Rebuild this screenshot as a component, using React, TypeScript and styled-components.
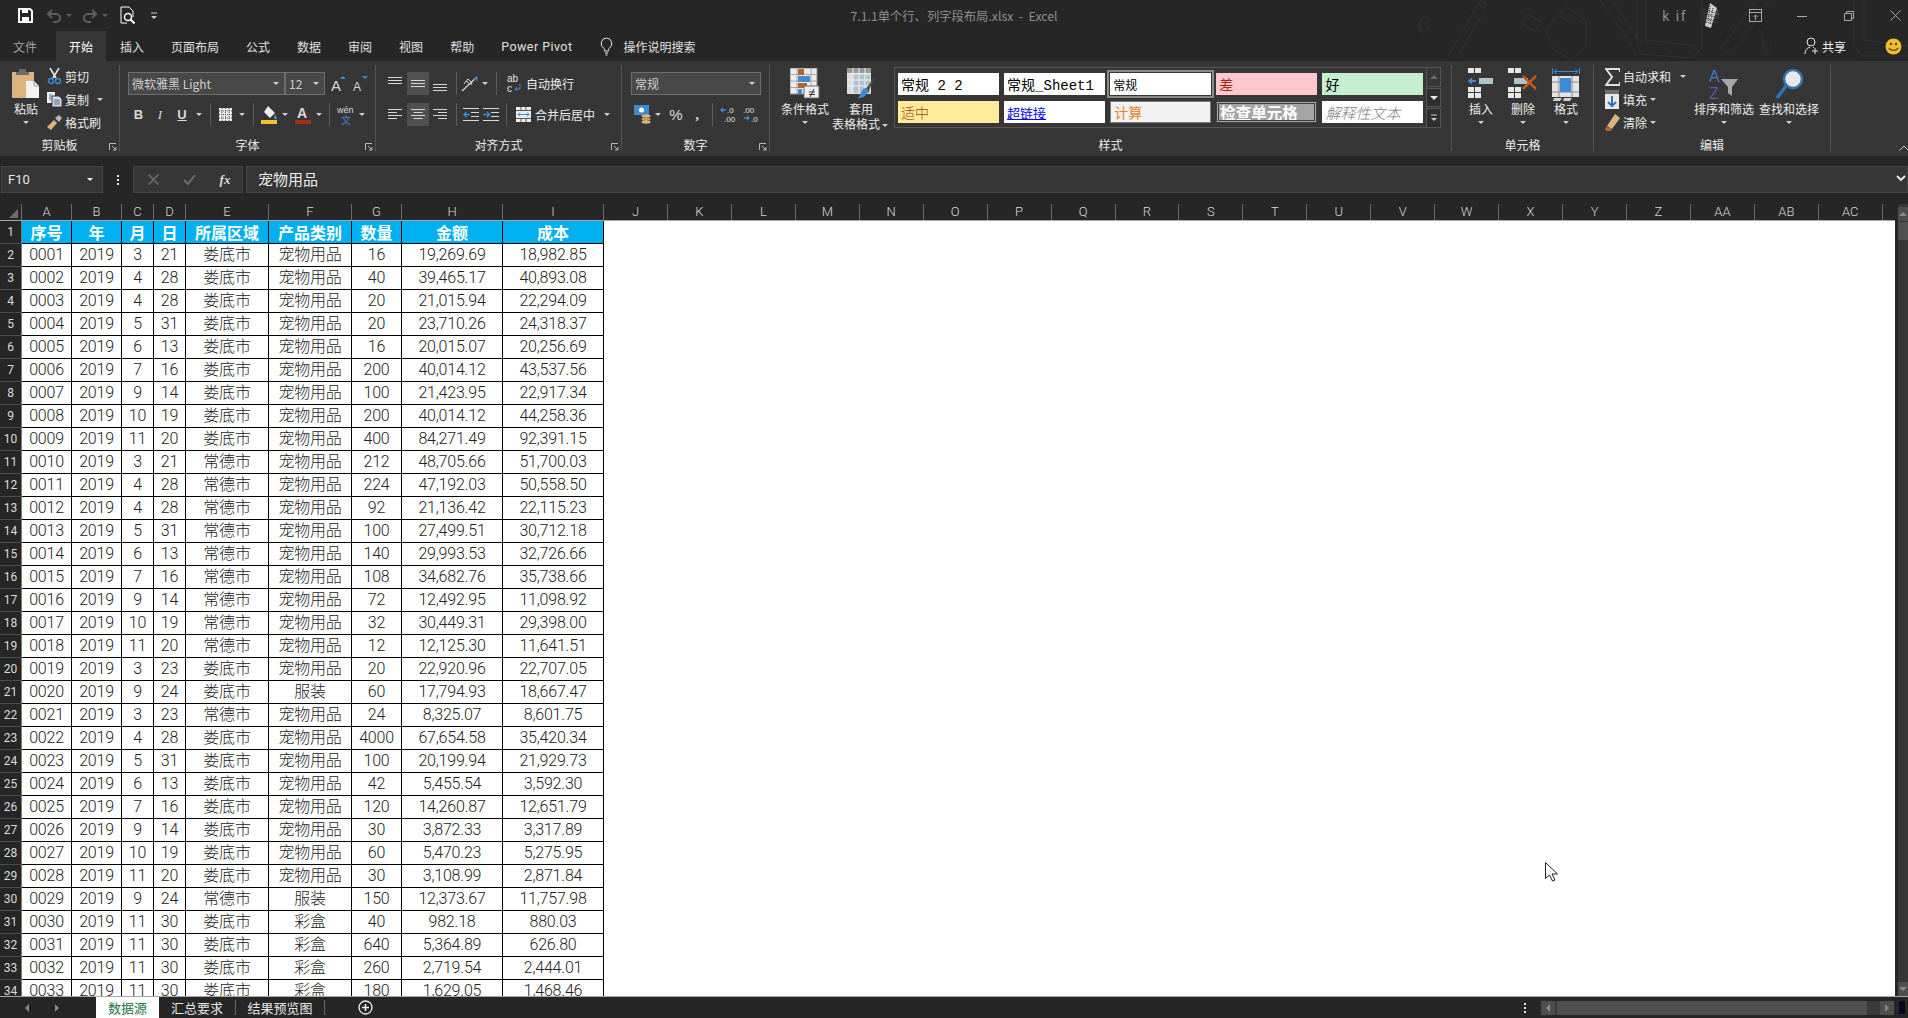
import * as React from 'react';
import styled, { createGlobalStyle } from 'styled-components';

const Global = createGlobalStyle`
  html, body { margin: 0; padding: 0; background: #262626; overflow: hidden; }
  * { box-sizing: border-box; }
`;

const UI_FONT = `"Noto Sans CJK SC", "Noto Sans", sans-serif`;
const CELL_FONT = `Roboto, "Noto Sans CJK SC", sans-serif`;

const Win = styled.div`
  width: 1908px;
  height: 1018px;
  display: flex;
  flex-direction: column;
  overflow: hidden;
  position: relative;
  background: #262626;
  color: #e6e6e6;
  font: 12px ${UI_FONT};
`;

/* ---------- title + tabs ---------- */
const Header = styled.header`
  position: relative;
  height: 61px;
  flex: none;
`;
const Doodles = styled.svg`
  position: absolute;
  left: 1400px;
  top: 0;
`;
const TitleBar = styled.div`
  position: relative;
  height: 31px;
  display: grid;
  grid-template-columns: 1fr auto 1fr;
  align-items: center;
`;
const Quick = styled.div`
  display: flex;
  align-items: center;
  padding-left: 16px;
`;
const Slot = styled.span<{ $w: number; $ml?: number; $h?: number; $active?: boolean }>`
  width: ${p => p.$w}px;
  height: ${p => p.$h ?? 23}px;
  margin-left: ${p => p.$ml ?? 0}px;
  flex: none;
  display: flex;
  align-items: center;
  justify-content: center;
  background: ${p => (p.$active ? '#505050' : 'transparent')};
`;
const Caret = styled.span<{ $w?: number; $c?: string; $ml?: number }>`
  width: ${p => p.$w ?? 10}px;
  margin-left: ${p => p.$ml ?? 0}px;
  flex: none;
  display: flex;
  justify-content: center;
  &::after {
    content: '';
    border-left: 3px solid transparent;
    border-right: 3px solid transparent;
    border-top: 3px solid ${p => p.$c ?? '#cfcfcf'};
  }
`;
const InlineCaret = styled(Caret)`
  display: inline-flex;
  vertical-align: middle;
`;
const DocTitle = styled.div`
  color: #8e8e8e;
  font-size: 12.3px;
  white-space: pre;
`;
const WinControls = styled.div`
  display: flex;
  align-items: center;
  justify-content: flex-end;
`;
const UserName = styled.span`
  color: #8e8e8e;
  font: 14px Roboto, sans-serif;
  letter-spacing: 1.5px;
  margin-right: 11px;
`;
const TabBar = styled.nav`
  position: relative;
  height: 30px;
  display: flex;
  align-items: stretch;
`;
const Tab = styled.span<{ $active?: boolean; $dim?: boolean; $ml?: number; $mr?: number }>`
  display: flex;
  align-items: center;
  padding: 0 13px;
  margin-right: ${p => p.$mr ?? 1}px;
  margin-left: ${p => p.$ml ?? 0}px;
  background: ${p => (p.$active ? '#363636' : 'transparent')};
  color: ${p => (p.$dim ? '#a0a0a0' : p.$active ? '#ffffff' : '#e0e0e0')};
  font-size: 12px;
`;
const PowerPivot = styled(Tab)`
  font: 12.5px Roboto, sans-serif;
  letter-spacing: 0.45px;
  padding: 0;
`;
const TellMe = styled.span`
  display: flex;
  align-items: center;
  gap: 11px;
  margin-left: 26px;
  color: #e0e0e0;
`;
const Share = styled.div`
  margin-left: auto;
  display: flex;
  align-items: center;
  padding-right: 5px;
  color: #f0f0f0;
`;

/* ---------- ribbon ---------- */
const Ribbon = styled.div`
  position: relative;
  height: 95px;
  flex: none;
  display: flex;
  background: #363636;
`;
const Group = styled.section<{ $w: number }>`
  position: relative;
  width: ${p => p.$w}px;
  margin: 4px 0 5px;
  flex: none;
  display: flex;
  flex-direction: column;
  border-right: 1px solid #555;
`;
const GroupBody = styled.div<{ $pl?: number }>`
  flex: 1;
  display: flex;
  padding-left: ${p => p.$pl ?? 0}px;
  min-height: 0;
`;
const GroupLabel = styled.div`
  height: 12px;
  line-height: 12px;
  text-align: center;
  color: #ececec;
`;
const Launcher = styled.svg`
  position: absolute;
  right: 2px;
  bottom: 0;
`;
const Collapse = styled(Slot)`
  align-self: flex-end;
  margin-bottom: 3px;
`;
const Stack = styled.div<{ $w?: number }>`
  display: flex;
  flex-direction: column;
  width: ${p => (p.$w ? `${p.$w}px` : 'auto')};
  flex: none;
`;
const ToolStack = styled(Stack)`
  padding-top: 7px;
  gap: 8px;
`;
const ToolRow = styled.div`
  display: flex;
  align-items: center;
  height: 23px;
`;
const SmallRow = styled.div`
  display: flex;
  align-items: center;
  height: 23px;
  color: #ececec;
`;
const SmallIcon = styled.span`
  width: 16px;
  margin-right: 3px;
  display: flex;
  justify-content: center;
  flex: none;
`;
const BigBtn = styled.div<{ $w: number }>`
  width: ${p => p.$w}px;
  flex: none;
  display: flex;
  flex-direction: column;
  align-items: center;
  color: #ececec;
  line-height: 15px;
  white-space: nowrap;
`;
const BigIcon = styled.div`
  height: 36px;
  padding-top: 3px;
  display: flex;
  align-items: flex-start;
  justify-content: center;
  flex: none;
`;
const BigCaret = styled(Caret)`
  margin-top: 5px;
`;
const Combo = styled.div<{ $w: number; $ml?: number }>`
  width: ${p => p.$w}px;
  height: 23px;
  margin-left: ${p => p.$ml ?? 0}px;
  flex: none;
  display: flex;
  align-items: center;
  justify-content: space-between;
  padding: 0 3px;
  background: #484848;
  border: 1px solid #6e6e6e;
  color: #cfcfcf;
`;
const Sep = styled.span<{ $w?: number }>`
  width: ${p => p.$w ?? 10}px;
  height: 23px;
  flex: none;
  display: flex;
  justify-content: center;
  &::after {
    content: '';
    width: 1px;
    background: #5c5c5c;
  }
`;
const BoldGlyph = styled.span<{ $i?: boolean; $u?: boolean }>`
  font: ${p => (p.$i ? 'italic 400' : '700')} 13px "Liberation Serif", serif;
  font-family: ${p => (p.$i ? '"Liberation Serif", serif' : '"Liberation Sans", sans-serif')};
  color: #d8d8d8;
  text-decoration: ${p => (p.$u ? 'underline' : 'none')};
`;
const BarLabel = styled.span`
  color: #ececec;
  font-size: 12px;
  margin-left: 2px;
`;
const Percent = styled.span`
  font: 15px "Liberation Sans", sans-serif;
  color: #dcdcdc;
`;
const Comma = styled.span`
  font: 700 15px "Liberation Serif", serif;
  color: #dcdcdc;
`;

/* style gallery */
const Gallery = styled.div`
  display: flex;
  margin: 2px 0 0 4px;
  height: 61px;
  align-self: flex-start;
`;
const GalleryGrid = styled.div`
  width: 533px;
  height: 61px;
  border: 1px solid #555;
  padding: 5px 3px;
  display: grid;
  grid-template-columns: repeat(5, 100.6px);
  grid-template-rows: 22px 22px;
  column-gap: 5.5px;
  row-gap: 6px;
`;
type CellKind = 'mono' | 'current' | 'bad' | 'good' | 'neutral' | 'link' | 'calc' | 'check' | 'note';
const STYLE_CSS: Record<CellKind, string> = {
  mono: 'background:#fff;color:#000;font:14px "Liberation Mono","Noto Sans CJK SC",monospace;',
  current: 'background:#fff;color:#000;outline:2px solid #8a8a8a;outline-offset:1px;',
  bad: 'background:#ffc7ce;color:#a12a10;font-size:14px;',
  good: 'background:#c6efce;color:#000;font-size:14px;',
  neutral: 'background:#ffeb9c;color:#9c4a00;font-size:14px;font-weight:300;',
  link: 'background:#fff;color:#0000ff;font-size:13px;text-decoration:underline;',
  calc: 'background:#f2f2f2;color:#e8821e;font-size:14px;border:1px solid #7f7f7f;',
  check: 'background:#a5a5a5;color:#fff;font-size:15.5px;font-weight:700;border:3px double #3f3f3f;padding-left:1px!important;',
  note: 'background:#fff;color:#7f7f7f;font-size:15px;font-style:italic;font-weight:300;',
};
const StyleCell = styled.div<{ $k: CellKind }>`
  display: flex;
  align-items: center;
  padding-left: 3px;
  font-size: 12px;
  white-space: pre;
  overflow: hidden;
  ${p => STYLE_CSS[p.$k]}
`;
const GalleryScroll = styled.div`
  width: 14px;
  display: flex;
  flex-direction: column;
  gap: 1px;
`;
const ScrollBtn = styled.span<{ $off?: boolean }>`
  flex: 1;
  border: 1px solid #555;
  border-left: none;
  display: flex;
  align-items: center;
  justify-content: center;
  background: ${p => (p.$off ? '#363636' : '#2e2e2e')};
`;

/* ---------- formula bar ---------- */
const FormulaBar = styled.div`
  height: 27px;
  margin: 10px 0 11px;
  flex: none;
  display: flex;
  align-items: stretch;
`;
const NameBox = styled.div`
  width: 102px;
  margin-left: 1px;
  background: #363636;
  border: 1px solid #444;
  display: flex;
  align-items: center;
  justify-content: space-between;
  padding: 0 6px;
  font: 13px Roboto, sans-serif;
  color: #e6e6e6;
`;
const VDots = styled.span`
  display: flex;
  flex-direction: column;
  align-items: center;
  justify-content: center;
  gap: 2px;
  width: 30px;
  flex: none;
  & > i { width: 2px; height: 2px; background: #e6e6e6; display: block; }
`;
const FxBox = styled.div`
  width: 110px;
  background: #363636;
  border: 1px solid #444;
  display: flex;
  align-items: center;
  padding-left: 1px;
`;
const FxGlyph = styled.span`
  font: italic 700 13px "Liberation Serif", serif;
  color: #dcdcdc;
`;
const FormulaInput = styled.div`
  flex: 1;
  margin-left: 3px;
  background: #363636;
  border: 1px solid #444;
  display: flex;
  align-items: center;
  justify-content: space-between;
  padding: 0 1px 2px 11px;
  font-size: 15px;
  color: #f0f0f0;
`;

/* ---------- sheet ---------- */
const SheetArea = styled.div`
  flex: 1;
  min-height: 0;
  display: flex;
`;
const SheetPane = styled.div`
  width: 1895px;
  flex: none;
  display: flex;
  flex-direction: column;
`;
const ColHeadRow = styled.div`
  height: 17px;
  display: flex;
  flex: none;
  border-bottom: 1px solid #a6a6a6;
`;
const Corner = styled.span`
  width: 22px;
  flex: none;
  position: relative;
  border-right: 1px solid #6a6a6a;
  background: #262626;
  &::after {
    content: '';
    position: absolute;
    right: 3px;
    bottom: 2px;
    border-left: 9px solid transparent;
    border-bottom: 9px solid #6e6e6e;
  }
`;
const ColHead = styled.span<{ $w: number }>`
  width: ${p => p.$w}px;
  flex: none;
  text-align: center;
  line-height: 16px;
  font: 300 13px/16px ${CELL_FONT};
  color: #d8d8d8;
  border-right: 1px solid #6a6a6a;
`;
const SheetBody = styled.div`
  flex: 1;
  min-height: 0;
  overflow: hidden;
  background: #ffffff;
`;
const Grid = styled.table`
  table-layout: fixed;
  width: 604px;
  border-collapse: separate;
  border-spacing: 0;
  font: 300 16px ${CELL_FONT};
  letter-spacing: -0.2px;
  color: #222;
`;
const RowHead = styled.th`
  height: 23px;
  padding: 0;
  background: #262626;
  color: #dcdcdc;
  font: 400 12px ${CELL_FONT};
  letter-spacing: 0;
  text-align: center;
  border-right: 1px solid #7a7a7a;
  border-bottom: 1px solid #4a4a4a;
`;
const Cell = styled.td`
  height: 23px;
  padding: 0;
  text-align: center;
  white-space: nowrap;
  overflow: hidden;
  line-height: 22px;
  border-right: 1px solid #000;
  border-bottom: 1px solid #000;
`;
const HeadCell = styled(Cell)`
  background: #00b0f0;
  color: #fff;
  font-family: "Noto Sans CJK SC", sans-serif;
  font-weight: 700;
  letter-spacing: 0;
`;
const VScroll = styled.div`
  width: 10px;
  margin-left: 3px;
  padding-top: 3px;
  flex: none;
  background: #363636;
  display: flex;
  flex-direction: column;
`;
const VBtn = styled.span`
  height: 14px;
  flex: none;
  background: #4e4e4e;
  display: flex;
  align-items: center;
  justify-content: center;
`;
const VThumb = styled.span`
  height: 18px;
  margin: 1px 0 auto;
  background: #505050;
`;

/* ---------- sheet tabs ---------- */
const BottomBar = styled.footer`
  height: 22px;
  flex: none;
  display: flex;
  align-items: stretch;
  border-top: 1px solid #a6a6a6;
  background: #262626;
`;
const NavArrows = styled.div`
  width: 96px;
  flex: none;
  display: flex;
  align-items: center;
  padding-left: 23px;
  gap: 22px;
`;
const SheetTab = styled.span<{ $active?: boolean; $w: number }>`
  width: ${p => p.$w}px;
  flex: none;
  display: flex;
  align-items: center;
  justify-content: center;
  font-size: 13px;
  background: ${p => (p.$active ? '#ffffff' : 'transparent')};
  color: ${p => (p.$active ? '#1e7145' : '#e6e6e6')};
`;
const TabSep = styled.span`
  width: 1px;
  flex: none;
  margin: 3px 0;
  background: #6a6a6a;
`;
const AddSheet = styled.span`
  margin-left: 33px;
  display: flex;
  align-items: center;
`;
const HScrollWrap = styled.div`
  margin-left: auto;
  display: flex;
  align-items: center;
  padding-right: 3px;
`;
const HTrack = styled.div`
  width: 353px;
  height: 14px;
  display: flex;
  background: #3a3a3a;
  margin-left: 1px;
`;
const HBtn = styled.span`
  width: 14px;
  flex: none;
  background: #4e4e4e;
  display: flex;
  align-items: center;
  justify-content: center;
`;
const HThumb = styled.span`
  width: 310px;
  margin-left: 2px;
  margin-right: auto;
  background: #505050;
`;
const TrayMark = styled.span`
  width: 6px;
  height: 13px;
  margin-left: 5px;
  background: #0a0a1a;
`;
const Pointer = styled.svg`
  position: absolute;
  left: 1545px;
  top: 862px;
`;

/* ---------- icons ---------- */
const I = ({ w, h = w, children }: { w: number; h?: number; children: React.ReactNode }) => (
  <svg width={w} height={h} viewBox={`0 0 ${w} ${h}`} fill="none">{children}</svg>
);
const SaveIcon = () => (
  <I w={15}><path d="M1 1h11l2 2v11H1z" stroke="#fff" strokeWidth="2" /><rect x="4" y="1" width="6" height="4" fill="#fff" /><rect x="4" y="9" width="7" height="5" fill="#fff" /></I>
);
const UndoIcon = ({ flip }: { flip?: boolean }) => (
  <I w={16}><g transform={flip ? 'matrix(-1 0 0 1 16 0)' : undefined}><path d="M6 2 2 6l4 4" stroke="#5e5e5e" strokeWidth="2" /><path d="M2.5 6H10a3.5 3.5 0 0 1 0 8H7" stroke="#5e5e5e" strokeWidth="2" /></g></I>
);
const PreviewIcon = () => (
  <I w={15} h={19}><path d="M1 1h8l4 4v6M1 1v16h6" stroke="#fff" /><circle cx="8" cy="11" r="3.5" stroke="#fff" strokeWidth="1.5" /><path d="m10.5 13.5 4 4" stroke="#fff" strokeWidth="2" /></I>
);
const Customize = () => (
  <I w={8} h={8}><path d="M1 1h6" stroke="#ccc" /><path d="M1 4h6L4 7z" fill="#ccc" /></I>
);
const Avatar = () => (
  <I w={22} h={28}>
    <circle cx="11" cy="14" r="10" fill="#2e2e2e" />
    <path d="M12 1 7 24l6 2 6-20z" fill="#cfcfcf" />
    <path d="M9 8l8 3M8 12l9 3M7 16l9 3M8 20l7 2M12 4l-2 16M15 6l-3 16" stroke="#222" strokeDasharray="1 1" />
    <path d="M17 9h3M18 12h3" stroke="#b88" strokeDasharray="1 1" />
  </I>
);
const RibbonMode = () => (
  <I w={13}><rect x=".5" y=".5" width="12" height="12" stroke="#a8a8a8" /><path d="M1 3.5h11" stroke="#a8a8a8" /><path d="M6.5 11V6M4.5 8l2-2 2 2" stroke="#a8a8a8" /></I>
);
const MinIcon = () => <I w={10}><path d="M0 5.5h10" stroke="#a8a8a8" /></I>;
const RestoreIcon = () => (
  <I w={10}><path d="M.5 2.5h7v7h-7zM2.5 2.5v-2h7v7h-2" stroke="#a8a8a8" /></I>
);
const CloseIcon = () => <I w={11}><path d="M.5.5l10 10M10.5.5l-10 10" stroke="#a8a8a8" /></I>;
const BulbIcon = () => (
  <I w={13} h={19}><path d="M6.5 1a5.5 5.5 0 0 0-3 10c.8.7 1 1.5 1 3h4c0-1.5.2-2.3 1-3a5.5 5.5 0 0 0-3-10z" stroke="#e6e6e6" /><path d="M5 16h3M5.5 18h2" stroke="#e6e6e6" /></I>
);
const ShareIcon = () => (
  <I w={15} h={18}><circle cx="7" cy="5" r="4" stroke="#e6e6e6" /><path d="M1 17c0-4 2-6 5-7M9 10l1 1" stroke="#e6e6e6" /><path d="M11 11v6M8 14h6" stroke="#e6e6e6" /></I>
);
const Smile = () => (
  <I w={17}><circle cx="8.5" cy="8.5" r="8" fill="#f0bd2e" /><circle cx="6" cy="6" r="1.2" fill="#5a3d00" /><circle cx="11" cy="6" r="1.2" fill="#5a3d00" /><path d="M4 10c1.5 3 7.5 3 9 0" stroke="#5a3d00" strokeWidth="1.2" /></I>
);
const PasteIcon = () => (
  <I w={28} h={30}>
    <rect x="0" y="4" width="22" height="26" rx="1" fill="#deb47e" />
    <path d="M7 4V1h7v3h3v3H4V4z" fill="#6b6b6b" />
    <path d="M14 13h8l5 5v12H14z" fill="#f2f2f2" />
    <path d="M22 13v5h5" stroke="#9a9a9a" />
  </I>
);
const ScissorsIcon = () => (
  <I w={15} h={17}><path d="M3 0l6 10M12 0 6 10" stroke="#e6e6e6" strokeWidth="1.6" /><circle cx="4" cy="13" r="2.5" stroke="#3d8bd4" strokeWidth="1.4" /><circle cx="11" cy="13" r="2.5" stroke="#3d8bd4" strokeWidth="1.4" /></I>
);
const CopyIcon = () => (
  <I w={15}><path d="M0 0h8v11H0z" fill="#f0f0f0" /><path d="M5 4h7l3 3v8H5z" fill="#dcdcdc" stroke="#363636" /><path d="M2 3h3M2 5h2M2 7h2M7 8h6M7 10h6M7 12h6" stroke="#3d6f9e" /></I>
);
const PainterIcon = () => (
  <I w={16}><path d="M8 5l3 3-6 7-4-3z" fill="#deb47e" /><path d="M9 3l4-3 3 3-3 4z" fill="#b8b8b8" /></I>
);
const FontGrow = ({ down }: { down?: boolean }) => (
  <I w={16} h={18}>
    <text x="0" y="16" fontFamily="Liberation Sans" fontSize={down ? 12 : 15} fill="#d8d8d8">A</text>
    <path d={down ? 'M9 1h6l-3 3z' : 'M9 4h6l-3-3z'} fill="#3d8bd4" />
  </I>
);
const BorderIcon = () => (
  <I w={13}><rect width="13" height="13" fill="#eee" /><path d="M0 3h13M0 6.5h13M0 10h13M3 0v13M6.5 0v13M10 0v13" stroke="#555" strokeDasharray="1 1" /></I>
);
const FillIcon = () => (
  <I w={17} h={19}><path d="M7 1l7 7-5 5-6-6z" fill="#eee" /><path d="M14 9c1 2 2 3 2 4a1.500 1.500 0 0 1-3 0c0-1 .5-2 1-4z" fill="#3d8bd4" /><rect y="15" width="16" height="4" fill="#f5c232" /></I>
);
const ColorIcon = () => (
  <I w={16} h={19}><text x="2" y="13" fontFamily="Liberation Sans" fontWeight="700" fontSize="14" fill="#dcdcdc">A</text><rect y="15" width="16" height="4" fill="#a5300f" /></I>
);
const PinyinIcon = () => (
  <I w={18} h={20}><text x="0" y="8" fontFamily="Liberation Sans" fontSize="9" fill="#dcdcdc">wén</text><text x="4" y="19" fontFamily="Noto Sans CJK SC" fontSize="10" fill="#3d8bd4">文</text></I>
);
const VAlign = ({ y }: { y: number }) => (
  <I w={14} h={16}><path d={`M0 ${y}.5h14M0 ${y + 3}.5h14M0 ${y + 6}.5h14`} stroke="#d8d8d8" /></I>
);
const HAlign = ({ kind }: { kind: 'l' | 'c' | 'r' }) => {
  const s = (w: number) => (kind === 'l' ? 0 : kind === 'c' ? (14 - w) / 2 : 14 - w);
  return (
    <I w={14} h={13}>
      {[[1, 14], [4, 9], [7, 14], [10, 9]].map(([y, w]) => (
        <path key={y} d={`M${s(w)} ${y}.5h${w}`} stroke="#d8d8d8" />
      ))}
    </I>
  );
};
const OrientIcon = () => (
  <I w={18} h={16}><path d="M1 15 16 1" stroke="#d8d8d8" strokeWidth="1.3" /><path d="M3 8l4-5 4 4-1 2M5 5l4 3" stroke="#d8d8d8" /><path d="M13 4l3-3v4" stroke="#3d8bd4" /></I>
);
const WrapIcon = () => (
  <I w={14} h={19}>
    <text x="0" y="8" fontFamily="Liberation Sans" fontSize="10" fill="#e6e6e6">ab</text>
    <text x="0" y="18" fontFamily="Liberation Sans" fontSize="10" fill="#e6e6e6">c</text>
    <path d="M13 10v5H8m2-2-2 2 2 2" stroke="#3d8bd4" />
  </I>
);
const IndentIcon = ({ inc }: { inc?: boolean }) => (
  <I w={16} h={13}>
    <path d="M0 .5h16M0 12.500h16" stroke="#d8d8d8" />
    <path d="M8 4.500h8M8 8.500h8" stroke="#d8d8d8" />
    <path d={inc ? 'M0 6.500h6M4 4l2.500 2.500L4 9' : 'M7 6.500H1M3.500 4 1 6.500 3.500 9'} stroke="#3d8bd4" strokeWidth="1.5" />
  </I>
);
const MergeIcon = () => (
  <I w={15}><rect width="15" height="15" fill="#eee" /><path d="M0 3.500h15M0 11.500h15M5 0v3M10 0v3M5 12v3M10 12v3" stroke="#555" /><path d="M2 7.500h11M4 5.500l-2 2 2 2M11 5.500l2 2-2 2" stroke="#3d8bd4" /></I>
);
const CurrencyIcon = () => (
  <I w={17} h={19}><rect width="15" height="10" fill="#3d8bd4" /><circle cx="7.500" cy="5" r="2.500" fill="#fff" /><ellipse cx="12" cy="11" rx="4.500" ry="1.700" fill="#deb47e" /><ellipse cx="12" cy="14" rx="4.500" ry="1.700" fill="#c99a5e" /><ellipse cx="12" cy="17" rx="4.500" ry="1.700" fill="#deb47e" /></I>
);
const DecimalIcon = ({ inc }: { inc?: boolean }) => (
  <I w={18} h={17}>
    <text x={inc ? 7 : 0} y="7" fontFamily="Liberation Sans" fontSize="8" fill="#e0e0e0">{inc ? '.0' : '.00'}</text>
    <text x={inc ? 4 : 8} y="16" fontFamily="Liberation Sans" fontSize="8" fill="#e0e0e0">{inc ? '.00' : '.0'}</text>
    <path d={inc ? 'M6 4H1M3 2 1 4l2 2' : 'M1 12h5M4 10l2 2-2 2'} stroke="#3d8bd4" strokeWidth="1.3" />
  </I>
);
const CondIcon = () => (
  <I w={30} h={31}>
    <rect width="27" height="26" fill="#ececec" stroke="#8a8a8a" />
    <path d="M7 0v26M21 0v26M0 6.500h27M0 13h27M0 19.500h27" stroke="#a8a8a8" />
    <rect x="8" y="1" width="6" height="6" fill="#b8622a" />
    <rect x="8" y="8" width="12" height="6" fill="#3d8bd4" />
    <rect x="8" y="15" width="9" height="5" fill="#b8622a" />
    <rect x="8" y="21" width="4" height="5" fill="#3d8bd4" />
    <rect x="14" y="18" width="15" height="12" fill="#f0f0f0" stroke="#6a6a6a" />
    <path d="M19 24h6M19 26.500h6M24 21l-4 8" stroke="#333" />
  </I>
);
const TableFmtIcon = () => (
  <I w={30} h={32}>
    <rect x="1" width="24" height="26" fill="#dcdcdc" />
    <rect x="1" width="24" height="5" fill="#9a9a9a" />
    <rect x="7" y="6" width="17" height="19" fill="#b0c4d0" />
    <path d="M7 0v26M13 0v26M19 0v26M1 6h24M1 12h24M1 18h24" stroke="#f0f0f0" />
    <path d="M29 8 19 22l3 3z" fill="#555" />
    <path d="M17 21c3-2 5 0 5 3-1 4-8 7-10 6 2-2 3-6 5-9z" fill="#3d8bd4" />
  </I>
);
const Tiles = ({ x, y, cols, rows }: { x: number; y: number; cols: number; rows: number }) => (
  <>
    {Array.from({ length: cols * rows }).map((_, n) => (
      <rect key={n} x={x + (n % cols) * 7} y={y + Math.floor(n / cols) * 6} width="6" height="5" fill="#e8e8e8" />
    ))}
  </>
);
const InsertIcon = () => (
  <I w={26} h={33}>
    <Tiles x={0} y={0} cols={2} rows={1} />
    <path d="M8 13H1M4 10.500 1 13l3 2.500" stroke="#3d8bd4" strokeWidth="1.800" />
    <rect x="11" y="10" width="14" height="6" fill="#b0c4d0" />
    <Tiles x={0} y={19} cols={2} rows={2} />
  </I>
);
const DeleteIcon = () => (
  <I w={30} h={33}>
    <Tiles x={0} y={0} cols={2} rows={1} />
    <rect x="6" y="10" width="14" height="6" fill="#b0c4d0" />
    <path d="M15 8l13 13M28 8 15 21" stroke="#c05a1c" strokeWidth="2.500" />
    <Tiles x={0} y={19} cols={2} rows={2} />
  </I>
);
const FormatIcon = () => (
  <I w={28} h={34}>
    <path d="M.5 0v6M27.500 0v6M2 3.500h24M5 1 2 3.500 5 6M23 1l3 2.500L23 6" stroke="#3d8bd4" />
    <rect y="8" width="27" height="21" fill="#e4e4e4" />
    <path d="M7 8v21M20 8v21M0 14h27M0 24h27" stroke="#8a8a8a" />
    <rect x="8" y="10" width="11" height="14" fill="#3d8bd4" />
    <path d="M2 30h8l-2 3H1zM12 30h8l-2 3h-7z" fill="#cfcfcf" />
  </I>
);
const SumIcon = () => <I w={15} h={18}><path d="M15 4V1H1l6 8-6 8h14v-3" stroke="#e0e0e0" strokeWidth="2" /></I>;
const FillDownIcon = () => (
  <I w={14} h={19}><rect width="14" height="19" fill="#e8e8e8" /><rect width="14" height="4" fill="#6e6e6e" /><path d="M7 6v10M3 12l4 4 4-4" stroke="#2e75b6" strokeWidth="2" /></I>
);
const EraserIcon = () => (
  <I w={15} h={17}><path d="M10 0l5 4-8 11-5-3z" fill="#deb47e" /><path d="M2 12l5 3-1.500 2H1L0 15z" fill="#b5652f" /></I>
);
const SortIcon = () => (
  <I w={30} h={33}>
    <text x="0" y="14" fontFamily="Liberation Sans" fontSize="16" fill="#3d7fc4">A</text>
    <text x="0" y="31" fontFamily="Liberation Sans" fontSize="16" fill="#6b4ea0">Z</text>
    <path d="M12 11h17l-6 8v9l-4-3v-6z" fill="#a8a8a8" />
  </I>
);
const FindIcon = () => (
  <I w={28} h={33}><circle cx="18" cy="11" r="9" fill="#e8e8e8" stroke="#2e75b6" strokeWidth="2.500" /><path d="M11 18 2 30" stroke="#2e75b6" strokeWidth="3.500" /></I>
);
const LauncherIcon = () => (
  <Launcher width="8" height="8" viewBox="0 0 8 8" fill="none"><path d="M.5 7V.5H7M3 3l4 4M7 4v3H4" stroke="#b8b8b8" /></Launcher>
);
const Tri = ({ dir, c }: { dir: 'u' | 'd' | 'l' | 'r'; c: string }) => {
  const d = { u: 'M0 6 4 2l4 4z', d: 'M0 2l4 4 4-4z', l: 'M6 0 2 4l4 4z', r: 'M2 0l4 4-4 4z' }[dir];
  return <I w={8}><path d={d} fill={c} /></I>;
};

/* ---------- data ---------- */
const L = '娄底市';
const C = '常德市';
const P = '宠物用品';
const F = '服装';
const B = '彩盒';
const ROWS: (string | number)[][] = [
  [3, 21, L, P, 16, '19,269.69', '18,982.85'],
  [4, 28, L, P, 40, '39,465.17', '40,893.08'],
  [4, 28, L, P, 20, '21,015.94', '22,294.09'],
  [5, 31, L, P, 20, '23,710.26', '24,318.37'],
  [6, 13, L, P, 16, '20,015.07', '20,256.69'],
  [7, 16, L, P, 200, '40,014.12', '43,537.56'],
  [9, 14, L, P, 100, '21,423.95', '22,917.34'],
  [10, 19, L, P, 200, '40,014.12', '44,258.36'],
  [11, 20, L, P, 400, '84,271.49', '92,391.15'],
  [3, 21, C, P, 212, '48,705.66', '51,700.03'],
  [4, 28, C, P, 224, '47,192.03', '50,558.50'],
  [4, 28, C, P, 92, '21,136.42', '22,115.23'],
  [5, 31, C, P, 100, '27,499.51', '30,712.18'],
  [6, 13, C, P, 140, '29,993.53', '32,726.66'],
  [7, 16, C, P, 108, '34,682.76', '35,738.66'],
  [9, 14, C, P, 72, '12,492.95', '11,098.92'],
  [10, 19, C, P, 32, '30,449.31', '29,398.00'],
  [11, 20, C, P, 12, '12,125.30', '11,641.51'],
  [3, 23, L, P, 20, '22,920.96', '22,707.05'],
  [9, 24, L, F, 60, '17,794.93', '18,667.47'],
  [3, 23, C, P, 24, '8,325.07', '8,601.75'],
  [4, 28, L, P, 4000, '67,654.58', '35,420.34'],
  [5, 31, L, P, 100, '20,199.94', '21,929.73'],
  [6, 13, L, P, 42, '5,455.54', '3,592.30'],
  [7, 16, L, P, 120, '14,260.87', '12,651.79'],
  [9, 14, L, P, 30, '3,872.33', '3,317.89'],
  [10, 19, L, P, 60, '5,470.23', '5,275.95'],
  [11, 20, L, P, 30, '3,108.99', '2,871.84'],
  [9, 24, C, F, 150, '12,373.67', '11,757.98'],
  [11, 30, L, B, 40, '982.18', '880.03'],
  [11, 30, L, B, 640, '5,364.89', '626.80'],
  [11, 30, L, B, 260, '2,719.54', '2,444.01'],
  [11, 30, L, B, 180, '1,629.05', '1,468.46'],
];
const WIDTHS = [50, 50, 32, 32, 83, 83, 50, 101, 101];
const LETTERS = ['A', 'B', 'C', 'D', 'E', 'F', 'G', 'H', 'I'];
const EXTRA = ['J', 'K', 'L', 'M', 'N', 'O', 'P', 'Q', 'R', 'S', 'T', 'U', 'V', 'W', 'X', 'Y', 'Z', 'AA', 'AB', 'AC'];
const HEADS = ['序号', '年', '月', '日', '所属区域', '产品类别', '数量', '金额', '成本'];

const App = () => (
  <Win>
    <Global />
    <Header>
      <Doodles width="508" height="61" viewBox="0 0 508 61" fill="none" stroke="#323232">
        <path d="M20 20c-4 6 0 14 4 12s6-10 3-14-6 0-7 5 1 8 3 7" />
        <path d="M46 60 78 4l8 4-30 52M78 4l3-4 5 3-1 5" />
        <path d="M127 14l14 7-6 10-14-7zM121 24l14 7" />
        <path d="M146 30l20-24 20 15v25l-15 14M146 30l8 20 17 10M160 16l12 6" />
        <path d="M200 0l35 50M212 0l30 44" />
        <path d="M237 0v45l5 9 50 4 10-10V0M246 0v40l50 6" />
        <path d="M320 50 356 0M330 55 370 0M360 30l8 26" />
        <path d="M363 42c-3 6 2 14 6 12s3-10 0-14" />
        <path d="M454 0v46l8 10h46M464 0v40l44 6" />
      </Doodles>
      <TitleBar>
        <Quick>
          <Slot $w={18}><SaveIcon /></Slot>
          <Slot $w={20} $ml={10}><UndoIcon /></Slot>
          <Caret $c="#5e5e5e" />
          <Slot $w={20} $ml={6}><UndoIcon flip /></Slot>
          <Caret $c="#5e5e5e" />
          <Slot $w={20} $ml={7}><PreviewIcon /></Slot>
          <Slot $w={12} $ml={11}><Customize /></Slot>
        </Quick>
        <DocTitle>{'7.1.1单个行、列字段布局.xlsx  -  Excel'}</DocTitle>
        <WinControls>
          <UserName>k if</UserName>
          <Slot $w={22} $h={28}><Avatar /></Slot>
          <Slot $w={46} $ml={12}><RibbonMode /></Slot>
          <Slot $w={46} $ml={1}><MinIcon /></Slot>
          <Slot $w={46} $ml={1}><RestoreIcon /></Slot>
          <Slot $w={26} $ml={10}><CloseIcon /></Slot>
        </WinControls>
      </TitleBar>
      <TabBar>
        <Tab $dim $mr={6}>文件</Tab>
        <Tab $active>开始</Tab>
        <Tab>插入</Tab>
        <Tab>页面布局</Tab>
        <Tab>公式</Tab>
        <Tab>数据</Tab>
        <Tab>审阅</Tab>
        <Tab>视图</Tab>
        <Tab>帮助</Tab>
        <PowerPivot $ml={13}>Power Pivot</PowerPivot>
        <TellMe><BulbIcon />操作说明搜索</TellMe>
        <Share>
          <ShareIcon />
          <Slot $w={24} $h={30} $ml={3}>共享</Slot>
          <Slot $w={20} $h={30} $ml={37}><Smile /></Slot>
        </Share>
      </TabBar>
    </Header>

    <Ribbon>
      <Group $w={120}>
        <GroupBody $pl={6}>
          <BigBtn $w={40}>
            <BigIcon><PasteIcon /></BigIcon>
            粘贴
            <BigCaret />
          </BigBtn>
          <Stack>
            <SmallRow><SmallIcon><ScissorsIcon /></SmallIcon>剪切</SmallRow>
            <SmallRow><SmallIcon><CopyIcon /></SmallIcon>复制<Caret $ml={6} /></SmallRow>
            <SmallRow><SmallIcon><PainterIcon /></SmallIcon>格式刷</SmallRow>
          </Stack>
        </GroupBody>
        <GroupLabel>剪贴板</GroupLabel>
        <LauncherIcon />
      </Group>

      <Group $w={256}>
        <GroupBody $pl={8}>
          <ToolStack>
            <ToolRow>
              <Combo $w={157}>微软雅黑 Light<Caret /></Combo>
              <Combo $w={40}>12<Caret /></Combo>
              <Slot $w={22} $ml={3}><FontGrow /></Slot>
              <Slot $w={22}><FontGrow down /></Slot>
            </ToolRow>
            <ToolRow>
              <Slot $w={21}><BoldGlyph>B</BoldGlyph></Slot>
              <Slot $w={22}><BoldGlyph $i>I</BoldGlyph></Slot>
              <Slot $w={22}><BoldGlyph $u>U</BoldGlyph></Slot>
              <Caret $w={12} />
              <Sep />
              <Slot $w={20}><BorderIcon /></Slot>
              <Caret $w={12} $ml={1} />
              <Sep />
              <Slot $w={22}><FillIcon /></Slot>
              <Caret />
              <Slot $w={22} $ml={2}><ColorIcon /></Slot>
              <Caret />
              <Sep $w={11} />
              <Slot $w={22}><PinyinIcon /></Slot>
              <Caret />
            </ToolRow>
          </ToolStack>
        </GroupBody>
        <GroupLabel>字体</GroupLabel>
        <LauncherIcon />
      </Group>

      <Group $w={246}>
        <GroupBody $pl={8}>
          <ToolStack>
            <ToolRow>
              <Slot $w={22}><VAlign y={1} /></Slot>
              <Slot $w={22} $ml={1} $active><VAlign y={4} /></Slot>
              <Slot $w={22}><VAlign y={8} /></Slot>
              <Sep />
              <Slot $w={18}><OrientIcon /></Slot>
              <Caret $ml={1} />
              <Sep $w={13} />
              <Slot $w={20} $ml={1}><WrapIcon /></Slot>
              <BarLabel>自动换行</BarLabel>
            </ToolRow>
            <ToolRow>
              <Slot $w={22}><HAlign kind="l" /></Slot>
              <Slot $w={22} $ml={1} $active><HAlign kind="c" /></Slot>
              <Slot $w={22}><HAlign kind="r" /></Slot>
              <Sep />
              <Slot $w={20}><IndentIcon /></Slot>
              <Slot $w={20}><IndentIcon inc /></Slot>
              <Sep $w={10} />
              <Slot $w={20} $ml={2}><MergeIcon /></Slot>
              <BarLabel>合并后居中</BarLabel>
              <Caret $w={24} />
            </ToolRow>
          </ToolStack>
        </GroupBody>
        <GroupLabel>对齐方式</GroupLabel>
        <LauncherIcon />
      </Group>

      <Group $w={148}>
        <GroupBody $pl={9}>
          <ToolStack>
            <ToolRow>
              <Combo $w={130}>常规<Caret /></Combo>
            </ToolRow>
            <ToolRow>
              <Slot $w={22}><CurrencyIcon /></Slot>
              <Caret />
              <Slot $w={22} $ml={2}><Percent>%</Percent></Slot>
              <Slot $w={20}><Comma>,</Comma></Slot>
              <Sep />
              <Slot $w={22} $ml={1}><DecimalIcon inc /></Slot>
              <Slot $w={22} $ml={1}><DecimalIcon /></Slot>
            </ToolRow>
          </ToolStack>
        </GroupBody>
        <GroupLabel>数字</GroupLabel>
        <LauncherIcon />
      </Group>

      <Group $w={682}>
        <GroupBody $pl={8}>
          <BigBtn $w={54}>
            <BigIcon><CondIcon /></BigIcon>
            条件格式
            <BigCaret />
          </BigBtn>
          <BigBtn $w={58}>
            <BigIcon><TableFmtIcon /></BigIcon>
            套用
            <span>表格格式<InlineCaret /></span>
          </BigBtn>
          <Gallery>
            <GalleryGrid>
              <StyleCell $k="mono">{'常规 2 2'}</StyleCell>
              <StyleCell $k="mono">常规_Sheet1</StyleCell>
              <StyleCell $k="current">常规</StyleCell>
              <StyleCell $k="bad">差</StyleCell>
              <StyleCell $k="good">好</StyleCell>
              <StyleCell $k="neutral">适中</StyleCell>
              <StyleCell $k="link">超链接</StyleCell>
              <StyleCell $k="calc">计算</StyleCell>
              <StyleCell $k="check">检查单元格</StyleCell>
              <StyleCell $k="note">解释性文本</StyleCell>
            </GalleryGrid>
            <GalleryScroll>
              <ScrollBtn $off><Tri dir="u" c="#6a6a6a" /></ScrollBtn>
              <ScrollBtn><Tri dir="d" c="#e6e6e6" /></ScrollBtn>
              <ScrollBtn><Customize /></ScrollBtn>
            </GalleryScroll>
          </Gallery>
        </GroupBody>
        <GroupLabel>样式</GroupLabel>
      </Group>

      <Group $w={142}>
        <GroupBody $pl={8}>
          <BigBtn $w={42}><BigIcon><InsertIcon /></BigIcon>插入<BigCaret /></BigBtn>
          <BigBtn $w={42}><BigIcon><DeleteIcon /></BigIcon>删除<BigCaret /></BigBtn>
          <BigBtn $w={44}><BigIcon><FormatIcon /></BigIcon>格式<BigCaret /></BigBtn>
        </GroupBody>
        <GroupLabel>单元格</GroupLabel>
      </Group>

      <Group $w={237}>
        <GroupBody $pl={10}>
          <Stack $w={88}>
            <SmallRow><SmallIcon><SumIcon /></SmallIcon>自动求和<Caret $ml={7} /></SmallRow>
            <SmallRow><SmallIcon><FillDownIcon /></SmallIcon>填充<Caret $w={8} $ml={2} /></SmallRow>
            <SmallRow><SmallIcon><EraserIcon /></SmallIcon>清除<Caret $w={8} $ml={2} /></SmallRow>
          </Stack>
          <BigBtn $w={64}><BigIcon><SortIcon /></BigIcon>排序和筛选<BigCaret /></BigBtn>
          <BigBtn $w={66}><BigIcon><FindIcon /></BigIcon>查找和选择<BigCaret /></BigBtn>
        </GroupBody>
        <GroupLabel>编辑</GroupLabel>
      </Group>

      <Collapse $w={12} $h={10} $ml={67}>
        <I w={10} h={6}><path d="M.5 5.500 5 1l4.500 4.500" stroke="#cfcfcf" /></I>
      </Collapse>
    </Ribbon>

    <FormulaBar>
      <NameBox>F10<Caret $w={12} $c="#f0f0f0" /></NameBox>
      <VDots><i /><i /><i /></VDots>
      <FxBox>
        <Slot $w={36}><I w={11}><path d="M.5.5l10 10M10.5.5l-10 10" stroke="#6e6e6e" strokeWidth="1.500" /></I></Slot>
        <Slot $w={36}><I w={13} h={11}><path d="M1 6l4 4 7-9" stroke="#6e6e6e" strokeWidth="2" /></I></Slot>
        <Slot $w={36}><FxGlyph>fx</FxGlyph></Slot>
      </FxBox>
      <FormulaInput>
        宠物用品
        <I w={10} h={7}><path d="M1 1l4 4 4-4" stroke="#f0f0f0" strokeWidth="1.800" /></I>
      </FormulaInput>
    </FormulaBar>

    <SheetArea>
      <SheetPane>
        <ColHeadRow>
          <Corner />
          {LETTERS.map((c, i) => <ColHead key={c} $w={WIDTHS[i]}>{c}</ColHead>)}
          {EXTRA.map(c => <ColHead key={c} $w={63.95}>{c}</ColHead>)}
        </ColHeadRow>
        <SheetBody>
          <Grid>
            <colgroup>
              <col width={22} />
              {WIDTHS.map((w, i) => <col key={i} width={w} />)}
            </colgroup>
            <tbody>
              <tr>
                <RowHead>1</RowHead>
                {HEADS.map(h => <HeadCell key={h}>{h}</HeadCell>)}
              </tr>
              {ROWS.map((r, i) => (
                <tr key={i}>
                  <RowHead>{i + 2}</RowHead>
                  <Cell>{String(i + 1).padStart(4, '0')}</Cell>
                  <Cell>2019</Cell>
                  {r.map((v, j) => <Cell key={j}>{v}</Cell>)}
                </tr>
              ))}
            </tbody>
          </Grid>
        </SheetBody>
      </SheetPane>
      <VScroll>
        <VBtn><Tri dir="u" c="#8a8a8a" /></VBtn>
        <VThumb />
        <VBtn><Tri dir="d" c="#8a8a8a" /></VBtn>
      </VScroll>
    </SheetArea>

    <BottomBar>
      <NavArrows><Tri dir="l" c="#8a8a8a" /><Tri dir="r" c="#8a8a8a" /></NavArrows>
      <SheetTab $active $w={63}>数据源</SheetTab>
      <SheetTab $w={76}>汇总要求</SheetTab>
      <TabSep />
      <SheetTab $w={88}>结果预览图</SheetTab>
      <TabSep />
      <AddSheet>
        <I w={15}><circle cx="7.500" cy="7.500" r="6.500" stroke="#f0f0f0" strokeWidth="1.300" /><path d="M7.500 4v7M4 7.500h7" stroke="#f0f0f0" strokeWidth="1.500" /></I>
      </AddSheet>
      <HScrollWrap>
        <VDots><i /><i /><i /></VDots>
        <HTrack>
          <HBtn><Tri dir="l" c="#8a8a8a" /></HBtn>
          <HThumb />
          <HBtn><Tri dir="r" c="#8a8a8a" /></HBtn>
        </HTrack>
        <TrayMark />
      </HScrollWrap>
    </BottomBar>

    <Pointer width="13" height="20" viewBox="0 0 13 20">
      <path d="M.5.500v16l4-3.500 3 6 2.500-1-3-6h5.500z" fill="#fff" stroke="#222" />
    </Pointer>
  </Win>
);

export default App;
